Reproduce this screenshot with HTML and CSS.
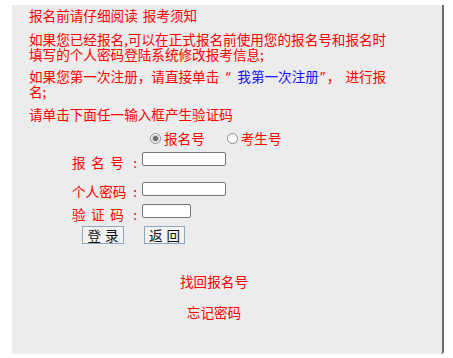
FILE: index.html
```html
<!DOCTYPE html>
<html lang="zh-CN">
<head>
<meta charset="utf-8">
<title>报名登录</title>
<link rel="stylesheet" href="styles.css">
</head>
<body>
<div class="panel">
  <div class="notice">
    <p class="p1">报名前请仔细阅读 报考须知</p>
    <p class="p2">如果您已经报名,可以在正式报名前使用您的报名号和报名时填写的个人密码登陆系统修改报考信息;</p>
    <p class="p3"><span>如果您第一次注册，请直接单击</span> <span class="q">“</span> <a class="blue" href="#">我第一次注册</a><span class="q">”</span><span>， 进行报</span><span>名;</span></p>
    <p class="p4">请单击下面任一输入框产生验证码</p>
  </div>
  <form class="login">
    <div class="radios">
      <label class="opt"><input type="radio" name="kind" class="radio" checked>报名号</label>
      <label class="opt"><input type="radio" name="kind" class="radio">考生号</label>
    </div>
    <div class="row row1">
      <span class="lbl"><span class="spaced">报名号</span><span class="colon">:</span></span>
      <input type="text" class="field">
    </div>
    <div class="row row2">
      <span class="lbl"><span>个人密码</span><span class="colon">:</span></span>
      <input type="password" class="field">
    </div>
    <div class="row row3">
      <span class="lbl"><span class="spaced">验证码</span><span class="colon">:</span></span>
      <input type="text" class="field short">
    </div>
    <div class="buttons">
      <button type="button" class="btn">登 录</button>
      <button type="button" class="btn btn2">返 回</button>
    </div>
  </form>
  <div class="links">
    <a href="#" class="link">找回报名号</a>
    <a href="#" class="link l2">忘记密码</a>
  </div>
</div>
</body>
</html>
```

FILE: styles.css
```css
html, body {
  margin: 0;
  padding: 0;
  background: #ffffff;
}
body {
  font-family: "Noto Sans CJK SC", "Noto Sans", sans-serif;
  font-size: 13.6px;
  word-spacing: 2px;
  color: #ff0000;
}
.panel {
  box-sizing: border-box;
  margin: 5px 0 0 12px;
  width: 432px;
  height: 349px;
  background: #ececec;
  border-right: 2px solid #636a78;
  border-bottom-right-radius: 3px;
  padding-top: 3px;
}
.notice {
  padding-left: 17px;
  width: 366px;
}
.notice p {
  margin: 0;
  line-height: 15px;
}
.p1 { margin-bottom: 9px !important; }
.p2 { margin-bottom: 7px !important; }
.p3 { margin-bottom: 8px !important; }
.q {
  font-family: "Noto Sans", "Liberation Sans", sans-serif;
  padding: 0 1.5px;
}
.blue {
  color: #1010ff;
  text-decoration: none;
}
.login {
  margin: 8.5px 0 0 0;
}
.radios {
  display: flex;
  padding-left: 138px;
  line-height: 15px;
  gap: 22px;
}
.opt {
  display: flex;
  align-items: center;
}
.radio {
  appearance: none;
  -webkit-appearance: none;
  box-sizing: border-box;
  width: 11px;
  height: 11px;
  margin: 0 3px 0 0;
  border: 1px solid #8a8a8a;
  border-radius: 50%;
  background: #ffffff;
}
.radio:checked {
  background: radial-gradient(circle, #6e6e6e 0 2.3px, #d6d6d6 2.8px 3.6px, #ffffff 4px);
}
.row {
  display: flex;
  align-items: flex-start;
  padding-left: 60px;
}
.row1 { margin-top: 6.5px; }
.row2 { margin-top: 12px; }
.row3 { margin-top: 5px; }
.lbl {
  display: flex;
  width: 65px;
  margin-top: 2.5px;
  margin-right: 5px;
  line-height: 15px;
}
.spaced {
  letter-spacing: 5.5px;
}
.colon {
  margin-left: auto;
}
.field {
  box-sizing: border-box;
  width: 84px;
  height: 14px;
  padding: 0 2px;
  margin: 0;
  border: 1px solid #767676;
  border-radius: 2px;
  background: #ffffff;
  font-size: 11px;
}
.field.short {
  width: 49px;
}
.buttons {
  display: flex;
  gap: 20px;
  padding-left: 70px;
  margin-top: 4.5px;
}
.btn {
  box-sizing: border-box;
  width: 42px;
  height: 18px;
  padding: 0;
  margin: 0;
  border: 1px solid #8fa4bd;
  background: #f3f3f3;
  color: #111111;
  font-family: "Noto Sans CJK SC", sans-serif;
  font-size: 13.6px;
  word-spacing: 1px;
  line-height: 15px;
}
.btn2 {
  width: 41px;
}
.links {
  width: 404px;
  margin-top: 30px;
  display: flex;
  flex-direction: column;
  align-items: center;
  gap: 16px;
}
.link {
  color: #ff0000;
  text-decoration: none;
  line-height: 15px;
}
```
